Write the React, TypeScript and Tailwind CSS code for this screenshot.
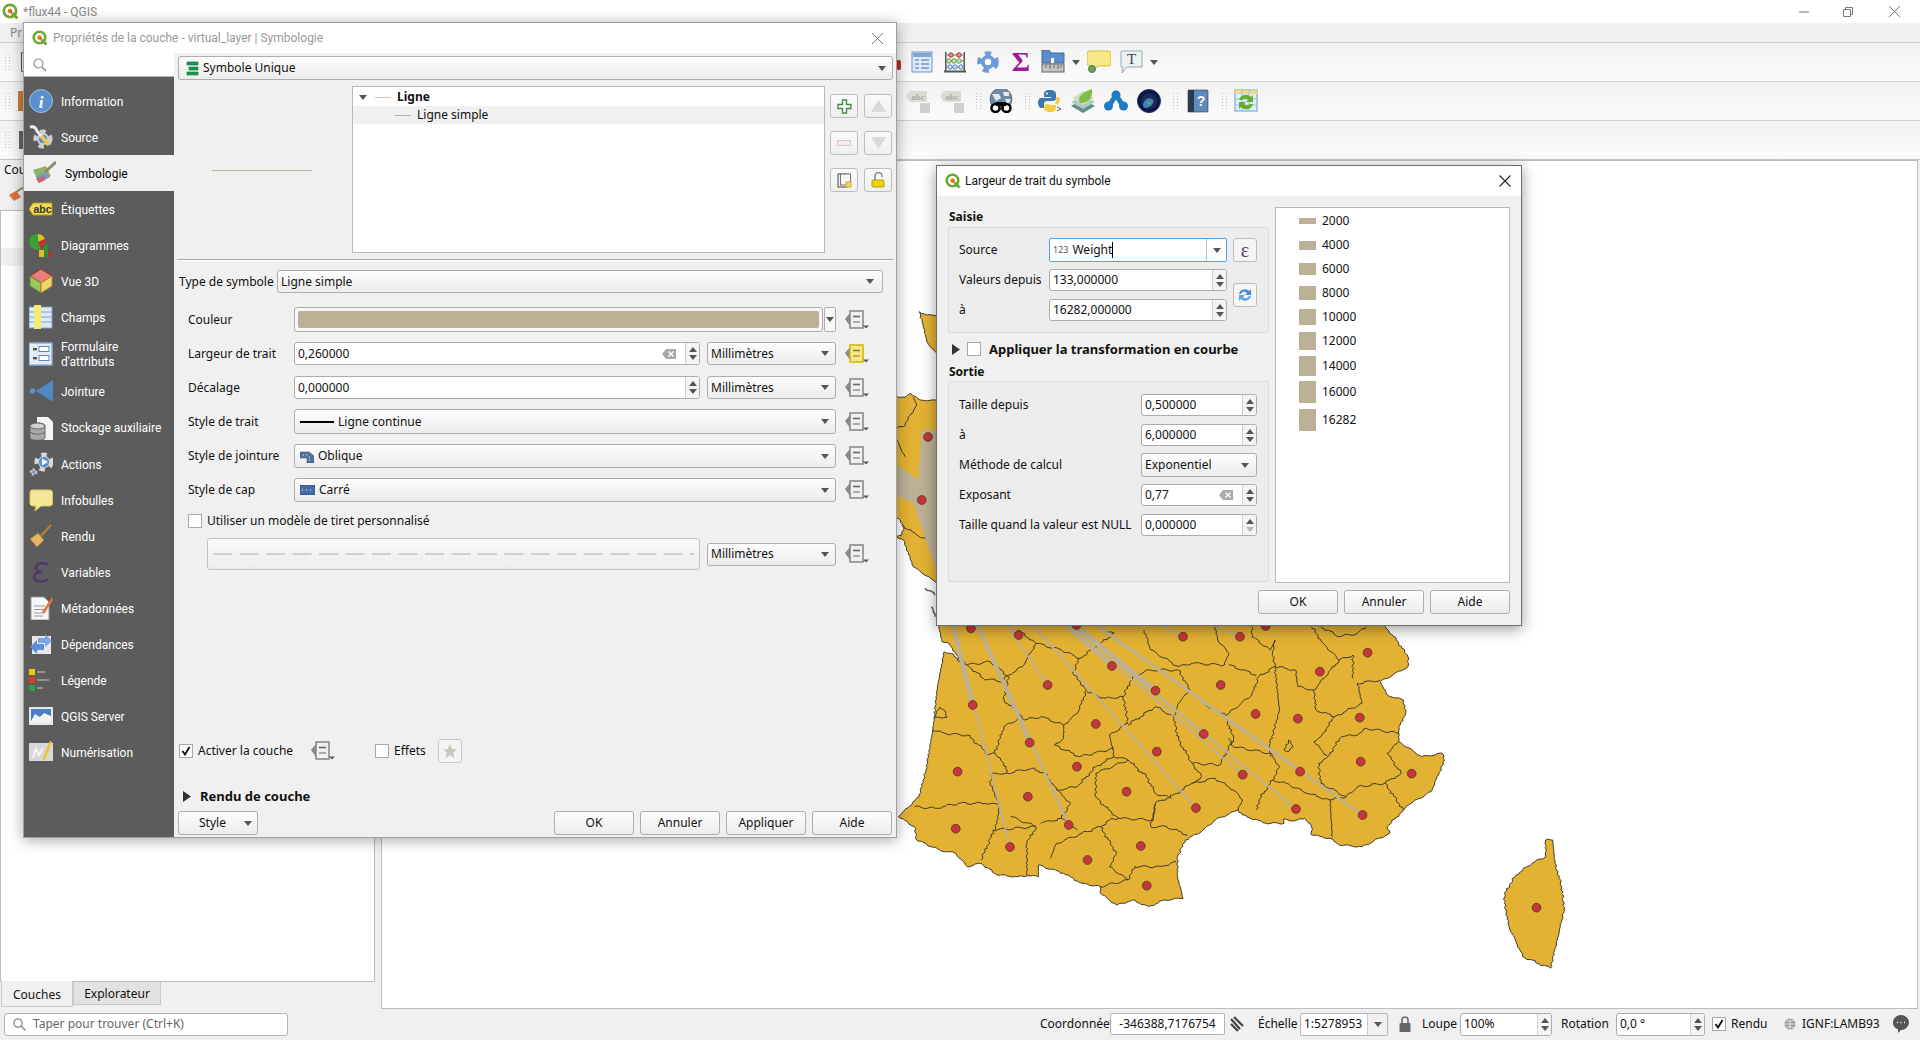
import { FC, ReactNode } from "react";

const FONT = "font-['Noto_Sans','Open_Sans',sans-serif]";
const NARROW = "font-['Roboto','Noto_Sans',sans-serif]";

type Pt = [number, number];

// map coordinates were read from crops of the reference, so convert them back to page pixels
const fromMain = ([x, y]: Pt): Pt => [880 + x / 2.178, 610 + y / 3];
const fromStrip = ([x, y]: Pt): Pt => [500 + x / 3, 340 + y / 3];

// subdivides a line and shakes it a bit, department borders are not smooth
const rough = (pts: Pt[], amp = 1, close = false): string => {
    let out = "";
    let seed = pts[0][0] * 0.37 + pts[0][1] * 0.11;
    const list = close ? [...pts, pts[0]] : pts;
    list.forEach((p, i) => {
        if (i === 0) {
            out += `M${p[0].toFixed(1)} ${p[1].toFixed(1)}`;
            return;
        }
        const q = list[i - 1];
        const len = Math.hypot(p[0] - q[0], p[1] - q[1]);
        const n = Math.max(1, Math.round(len / 2.6));
        for (let k = 1; k <= n; k++) {
            seed += 1.7;
            const t = k / n;
            const a = k === n ? 0 : Math.sin(seed * 12.9898) * amp;
            const b = k === n ? 0 : Math.sin(seed * 78.233) * amp;
            out += `L${(q[0] + (p[0] - q[0]) * t + a).toFixed(1)} ${(q[1] + (p[1] - q[1]) * t + b).toFixed(1)}`;
        }
    });
    return close ? out + "Z" : out;
};

const MAINLAND: Pt[] = [
    [128, -60], [128, 50], [135, 95], [150, 100], [170, 140], [175, 155], [155, 130], [140, 125], [125, 230], [118, 322],
    [128, 322], [146, 322], [140, 300], [130, 292], [118, 322], [115, 360], [100, 480], [85, 560], [40, 620], [75, 650], [80, 690], [130, 720], [165, 730],
    [190, 770], [220, 760], [255, 795], [300, 800], [320, 797], [345, 800], [345, 765], [400, 790], [440, 820], [480, 830],
    [480, 850], [515, 885], [550, 870], [585, 890], [620, 870], [660, 865], [648, 800], [648, 740], [665, 690], [700, 665],
    [730, 630], [780, 600], [790, 615], [840, 640], [880, 640], [878, 628], [905, 632], [925, 625], [940, 650], [940, 675], [980, 685], [1000, 705],
    [1050, 710], [1110, 670], [1105, 650], [1140, 600], [1150, 585], [1200, 545], [1230, 450], [1225, 430], [1180, 440],
    [1130, 395], [1130, 350], [1145, 310], [1140, 270], [1105, 255], [1090, 215], [1150, 170], [1150, 140], [1125, 90], [1100, 50], [1100, -60],
];

const CORSICA: Pt[] = [
    [1450, 690], [1465, 690], [1470, 760], [1485, 830], [1490, 900], [1470, 1020], [1460, 1075], [1400, 1040], [1385, 995],
    [1370, 950], [1360, 880], [1360, 850], [1385, 795], [1420, 760], [1450, 740],
];

const BORDERS: Pt[][] = [
    [[115, 360], [145, 372], [190, 375], [215, 405], [235, 435], [250, 430]],
    [[75, 590], [120, 595], [170, 580], [230, 580], [260, 585]],
    [[260, 585], [240, 520], [245, 490], [275, 490], [275, 470], [250, 430]],
    [[275, 490], [330, 475], [360, 490], [385, 540]],
    [[250, 430], [270, 350], [310, 320], [270, 270], [280, 200], [240, 155], [190, 165], [180, 150]],
    [[190, 165], [225, 205], [265, 215], [280, 195], [310, 170], [340, 100], [300, 60]],
    [[340, 100], [395, 120], [435, 145], [420, 190], [450, 240], [430, 310], [400, 345], [350, 320], [315, 330], [300, 310]],
    [[435, 145], [480, 100], [510, 70], [470, 50]],
    [[450, 245], [490, 265], [530, 260], [540, 340], [500, 375], [510, 440], [470, 470], [430, 530], [385, 540]],
    [[400, 345], [400, 385], [380, 405], [435, 440], [510, 415]],
    [[530, 260], [550, 200], [585, 180], [650, 180]],
    [[575, 60], [590, 120], [650, 170], [680, 160], [750, 165], [760, 130], [735, 90], [730, 50]],
    [[650, 180], [675, 240], [650, 280], [640, 325], [650, 390], [680, 460], [740, 465], [770, 385], [750, 310], [720, 295], [690, 260]],
    [[755, 315], [810, 255], [825, 200], [860, 170], [870, 300], [850, 400], [850, 440]],
    [[820, 195], [760, 165]],
    [[860, 170], [855, 130], [860, 90], [850, 120], [810, 80], [810, 50]],
    [[860, 170], [905, 180], [910, 230], [945, 240], [950, 300], [990, 320], [960, 380], [945, 395], [975, 440]],
    [[990, 320], [1050, 280], [1040, 220], [1090, 210]],
    [[945, 240], [1000, 150], [1030, 135], [1030, 205]],
    [[1000, 150], [965, 100], [940, 50]],
    [[975, 440], [1005, 380], [1040, 375], [1060, 355], [1130, 370]],
    [[975, 440], [955, 460], [960, 520], [1015, 560], [1040, 530], [1100, 520], [1135, 490], [1105, 430], [1130, 395]],
    [[1100, 520], [1140, 600]],
    [[1015, 560], [980, 570], [985, 680]],
    [[980, 570], [930, 550], [885, 520], [855, 510], [825, 570], [820, 600]],
    [[855, 510], [870, 470], [850, 430], [770, 410], [760, 385]],
    [[680, 460], [700, 500], [680, 520], [730, 505], [770, 540], [790, 570], [780, 600]],
    [[680, 520], [640, 555], [600, 580], [595, 630], [520, 625], [500, 630], [480, 650], [440, 670], [385, 700], [370, 745]],
    [[510, 440], [540, 450], [470, 490], [470, 560], [490, 590], [520, 625]],
    [[540, 450], [580, 500], [600, 550], [635, 565]],
    [[540, 345], [600, 290], [640, 320]],
    [[600, 580], [590, 650], [625, 650], [670, 675]],
    [[480, 650], [515, 730], [500, 770], [540, 810], [555, 770], [610, 770], [645, 755]],
    [[540, 810], [480, 830]],
    [[260, 585], [255, 640], [220, 750]],
    [[245, 660], [340, 650], [320, 700], [320, 795]],
    [[285, 620], [340, 650]],
    [[385, 540], [415, 580], [395, 625], [350, 640]],
    [[395, 625], [430, 660]],
    [[960, 50], [1000, 80], [1040, 70], [1060, 50]],
    [[880, 420], [890, 390], [900, 410], [885, 425], [880, 420]],
];

const STRIP_BORDERS: Pt[][] = [
    [[1190, 265], [1210, 260], [1250, 195], [1240, 172]],
    [[1190, 300], [1200, 320], [1215, 350]],
    [[1205, 555], [1250, 585], [1280, 600], [1310, 600]],
];

const DOTS: Pt[] = [
    [198, 55], [302, 75], [428, 45], [660, 80], [784, 80], [840, 48], [1062, 128], [958, 185], [505, 168], [365, 225], [600, 242],
    [742, 225], [202, 285], [818, 312], [910, 326], [1045, 323], [470, 342], [326, 398], [705, 372], [603, 425], [1047, 455],
    [169, 485], [429, 470], [915, 485], [790, 494], [1158, 491], [537, 545], [322, 560], [688, 594], [906, 597], [1051, 615],
    [165, 656], [411, 645], [283, 711], [568, 708], [452, 750], [581, 827], [1430, 893],
];

const HUB: Pt = [921.7, 500];
const FLOWS: [Pt, number][] = [
    [[283, 710], 1.8], [[202, 285], 4.5], [[411, 645], 2.5], [[326, 398], 3], [[302, 75], 1.8], [[365, 225], 1.8], [[688, 594], 2],
    [[505, 168], 3], [[600, 242], 4], [[705, 372], 1.8], [[790, 494], 1.8], [[905, 597], 2], [[915, 485], 2], [[1051, 615], 2.2],
    [[660, 80], 1.8], [[784, 80], 1.8],
];

const FranceMap: FC = () => {
    const yellow = "#e3b233";
    const line = "#3f3b30";
    return (
        <svg className="absolute inset-0" width={1536} height={847} viewBox="382 161 1536 847">
            <path d={rough(MAINLAND.map(fromMain), 0.8, true)} fill={yellow} stroke={line} strokeWidth={1} />
            <path d={rough(CORSICA.map(fromMain), 1, true)} fill={yellow} stroke={line} strokeWidth={1} />
            <path
                d={rough(([[1190, 170], [1215, 172], [1232, 160], [1260, 180], [1320, 182], [1320, 735], [1305, 725], [1240, 680], [1210, 600], [1190, 590], [1205, 585], [1212, 560], [1195, 535], [1170, 540], [1170, 170]] as Pt[]).map(fromStrip), 0.6, true)}
                fill={yellow}
                stroke={line}
                strokeWidth={1}
            />
            <path
                d={rough(([[1258, 935], [1280, 945], [1320, 945], [1320, 1070], [1300, 1050], [1280, 1025], [1270, 975]] as Pt[]).map(([x, y]): Pt => [500 + x / 3, y / 3]), 0.6, true)}
                fill={yellow}
                stroke={line}
                strokeWidth={1}
            />
            <path d={rough(([[1275, 745], [1290, 752], [1305, 765]] as Pt[]).map(fromStrip))} fill="none" stroke="#6b6656" strokeWidth={1.6} />
            <path d={rough(([[1295, 800], [1300, 815], [1305, 830]] as Pt[]).map(fromStrip))} fill="none" stroke="#6b6656" strokeWidth={1.6} />
            {BORDERS.map((b, i) => (
                <path key={i} d={rough(b.map(fromMain), 1.1)} fill="none" stroke={line} strokeWidth={1} />
            ))}
            {STRIP_BORDERS.map((b, i) => (
                <path key={i} d={rough(b.map(fromStrip), 1)} fill="none" stroke={line} strokeWidth={1} />
            ))}
            <polygon
                fill="#bcb096"
                points={([[1265, 270], [1320, 270], [1320, 740], [1305, 680], [1240, 490], [1170, 460], [1170, 360], [1255, 420]] as Pt[])
                    .map(fromStrip)
                    .map((p) => p.join(","))
                    .join(" ")}
            />
            {FLOWS.map(([to, w], i) => {
                const [x, y] = fromMain(to);
                return <line key={i} x1={HUB[0]} y1={HUB[1]} x2={x} y2={y} stroke="#bcb096" strokeWidth={w} />;
            })}
            {[...DOTS.map(fromMain), HUB, [928, 437] as Pt].map(([x, y], i) => (
                <circle key={i} cx={x} cy={y} r={4.4} fill="#c8353a" stroke="#4d3a2a" strokeWidth={0.8} />
            ))}
        </svg>
    );
};

const Arrow: FC<{ className?: string }> = ({ className = "" }) => (
    <svg width={8} height={5} viewBox="0 0 8 5" className={`shrink-0 ${className}`}>
        <path d="M0 0h8L4 5z" fill="#555" />
    </svg>
);

const Logo: FC<{ size?: number }> = ({ size = 16 }) => (
    <svg width={size} height={size} viewBox="0 0 16 16" className="shrink-0">
        <circle cx={7.5} cy={7.5} r={5.8} fill="#fff" stroke="#6fa82f" strokeWidth={2.6} />
        <path d="M9.5 9.5l5 5" stroke="#6fa82f" strokeWidth={2.8} />
        <circle cx={7.5} cy={7.5} r={2.2} fill="#ee7913" />
        <circle cx={8.6} cy={8.6} r={1} fill="#d63e2e" />
    </svg>
);

const DataDefined: FC<{ active?: boolean }> = ({ active }) => (
    <svg width={26} height={22} viewBox="0 0 26 22" className="shrink-0">
        <path d="M1 10l5-6v13z" fill="#888" />
        <rect x={6} y={2} width={13} height={17} fill={active ? "#f7e884" : "#f0f0f0"} stroke={active ? "#d9b611" : "#8b8b8b"} strokeWidth={1.6} />
        <path d="M9 7.5h7" stroke={active ? "#8d7c2a" : "#666"} strokeWidth={1.6} />
        <path d="M9 13h7" stroke={active ? "#b8a44d" : "#999"} strokeWidth={1.6} />
        <path d="M19 16.5h6l-3 3z" fill="#555" />
    </svg>
);

const Handle: FC = () => (
    <svg width={6} height={17} viewBox="0 0 6 17" className="shrink-0">
        {[1, 4, 7, 10, 13, 16].map((y) => (
            <g key={y} fill="#bdbdbd">
                <rect x={0} y={y - 1} width={1} height={1} />
                <rect x={4} y={y - 1} width={1} height={1} />
            </g>
        ))}
    </svg>
);

const Icon: FC<{ children: ReactNode; size?: number; className?: string }> = ({ children, size = 24, className = "" }) => (
    <svg width={size} height={size} viewBox="0 0 24 24" className={`shrink-0 ${className}`}>
        {children}
    </svg>
);

const Gear: FC<{ cx: number; cy: number; r: number; color: string }> = ({ cx, cy, r, color }) => (
    <g>
        <circle cx={cx} cy={cy} r={r} fill="none" stroke={color} strokeWidth={r * 0.55} strokeDasharray={`${r * 0.72} ${r * 0.72}`} />
        <circle cx={cx} cy={cy} r={r * 0.82} fill={color} />
        <circle cx={cx} cy={cy} r={r * 0.38} fill="#fff" />
    </g>
);

const sideIcons: Record<string, ReactNode> = {
    info: (
        <>
            <circle cx={12} cy={12} r={11.5} fill="#5c8fce" stroke="#9dbde6" />
            <text x={12} y={19} textAnchor="middle" fontSize={17} fontWeight={700} fontStyle="italic" fill="#fff" fontFamily="Liberation Serif">i</text>
        </>
    ),
    source: (
        <>
            <Gear cx={14} cy={14} r={7.5} color="#cfcfcf" />
            <circle cx={14} cy={14} r={4} fill="#4f86c6" />
            <path d="M1 2c4-1 6 1 7 4l11 13" stroke="#eee" strokeWidth={3} fill="none" />
            <path d="M12 11l8 9" stroke="#e4c95a" strokeWidth={4} />
        </>
    ),
    symbology: (
        <>
            <path d="M1 9l13-4 5 10-12 7z" fill="#8db36a" />
            <path d="M4 15l10-4 4 5-11 6z" fill="#7f95c5" />
            <path d="M4 18l8-3 1 4-6 3z" fill="#c86a6a" />
            <path d="M13 11L24 1" stroke="#8e8a70" strokeWidth={3} />
        </>
    ),
    labels: (
        <>
            <path d="M0 12l4-6h19v12H4z" fill="#f0dc4e" stroke="#b99a12" />
            <text x={13.5} y={16} textAnchor="middle" fontSize={10.5} fontWeight={700} fill="#333" fontFamily="Liberation Sans">abc</text>
        </>
    ),
    diagrams: (
        <>
            <path d="M9 9V1a8 8 0 0 1 7 5z" fill="#d5c41e" />
            <path d="M9 9l7-3a8 8 0 0 1-4 10z" fill="#c7322b" />
            <path d="M9 9l3 7A8 8 0 1 1 9 1z" fill="#3d9e3a" />
            <rect x={10} y={17} width={5} height={7} fill="#e2bd22" />
            <rect x={15} y={11} width={4} height={13} fill="#2e8c3a" />
            <rect x={19} y={19} width={4} height={5} fill="#b8302a" />
        </>
    ),
    threeD: (
        <>
            <path d="M12 0l11 7-11 7L1 7z" fill="#ea7d7d" stroke="#9b2f2f" />
            <path d="M1 7l11 7v10L1 17z" fill="#9fc85a" stroke="#63882f" />
            <path d="M23 7l-11 7v10l11-7z" fill="#f0d668" stroke="#a58d25" />
        </>
    ),
    fields: (
        <>
            <rect x={0} y={2} width={23} height={21} fill="#dfe9f6" stroke="#7ea1cd" />
            <path d="M0 7h23M0 12h23M0 17h23" stroke="#7ea1cd" />
            <rect x={5} y={0} width={7} height={25} fill="#f4ec6c" />
        </>
    ),
    form: (
        <>
            <rect x={0} y={1} width={23} height={22} fill="#e5edf7" stroke="#8eacd2" strokeWidth={1.5} />
            <rect x={4} y={6} width={4} height={2.4} fill="#555" />
            <rect x={4} y={15} width={4} height={2.4} fill="#555" />
            <rect x={10} y={4.5} width={10} height={5} fill="#fff" stroke="#5d88bd" />
            <rect x={10} y={13.5} width={10} height={5} fill="#fff" stroke="#5d88bd" />
        </>
    ),
    join: (
        <>
            <circle cx={3.5} cy={12} r={2.8} fill="#5a8fd0" />
            <path d="M7 12L24 1v22z" fill="#4f87c7" />
        </>
    ),
    storage: (
        <>
            <path d="M8 1h11l5 5v18H8z" fill="#f5f5f5" />
            <path d="M1 10c0-4 15-4 15 0v12c0 3-15 3-15 0z" fill="#a8a8a8" stroke="#666" />
            <ellipse cx={8.5} cy={10} rx={7.5} ry={3} fill="#d0d0d0" stroke="#666" />
            <path d="M1 16c3 3 12 3 15 0" fill="none" stroke="#666" />
        </>
    ),
    actions: (
        <>
            <Gear cx={15} cy={10} r={7.5} color="#d8d8d8" />
            <circle cx={15} cy={10} r={5.2} fill="#5a8fd0" />
            <path d="M13 6.5l6 3.5-6 3.5z" fill="#fff" />
            <Gear cx={4.5} cy={20} r={3} color="#c9c9c9" />
            <circle cx={4.5} cy={20} r={1.5} fill="#5a8fd0" />
        </>
    ),
    tips: (
        <path d="M3 2h18q2.500 0 2.500 3v10q0 3-3 3H12l-6 5 1-5H4q-3 0-3-3V5q0-3 2-3z" fill="#f4e79a" stroke="#d9c65c" />
    ),
    render: (
        <>
            <path d="M22 1L11 13" stroke="#b5812e" strokeWidth={2.5} />
            <path d="M1 15l8-6 6 7-7 7z" fill="#e3b36a" stroke="#a67b35" />
        </>
    ),
    variables: <path d="M19 5c-3-3-12-3-12 3 0 3 3 4 6 4-4 0-8 1-8 5 0 5 9 6 14 2" fill="none" stroke="#54346f" strokeWidth={2.4} />,
    metadata: (
        <>
            <path d="M2 1h13l5 5v18H2z" fill="#f7f7f7" stroke="#999" />
            <path d="M5 10h11M5 13.500h11M5 17h9M5 20h9" stroke="#999" />
            <path d="M13 16L23 1l1 3-9 14z" fill="#e0763a" />
        </>
    ),
    deps: (
        <>
            <rect x={3} y={4} width={19} height={18} fill="#e8e8ec" />
            <path d="M1 15l7-7v4h7v6H8v4z" fill="#5c90d8" />
            <path d="M23 9l-7-7v4H9v5h7v4z" fill="#7ba8e3" />
        </>
    ),
    legend: (
        <>
            <rect x={0} y={1} width={6} height={6} fill="#f2c511" />
            <rect x={0} y={9} width={6} height={6} fill="#dd3a1e" />
            <rect x={0} y={17} width={6} height={6} fill="#2da24a" />
            <path d="M8 4h8M8 12h12M8 20h6" stroke="#a5a5a5" strokeWidth={1.6} />
        </>
    ),
    server: (
        <>
            <rect x={0} y={3} width={24} height={18} fill="#e7e7e7" />
            <rect x={2} y={5} width={20} height={14} fill="#4a7fc4" />
            <path d="M2 17l4-7 5 3 4-4 7 3v7H2z" fill="#f2f2f2" />
        </>
    ),
    digitize: (
        <>
            <rect x={0} y={3} width={24} height={18} fill="#d8d8d8" />
            <path d="M4 18l3-9 3 6 4-7" stroke="#f5f5f5" strokeWidth={2} fill="none" />
            <path d="M13 19L21 1l2 1-7 18z" fill="#e6c63a" />
        </>
    ),
};

const SIDE_ITEMS: { label: string; icon: string; h: string; two?: boolean }[] = [
    { label: "Information", icon: "info", h: "h-[36px]" },
    { label: "Source", icon: "source", h: "h-[36px]" },
    { label: "Symbologie", icon: "symbology", h: "h-[36px]" },
    { label: "Étiquettes", icon: "labels", h: "h-[36px]" },
    { label: "Diagrammes", icon: "diagrams", h: "h-[36px]" },
    { label: "Vue 3D", icon: "threeD", h: "h-[36px]" },
    { label: "Champs", icon: "fields", h: "h-[36px]" },
    { label: "Formulaire d'attributs", icon: "form", h: "h-[38px]", two: true },
    { label: "Jointure", icon: "join", h: "h-[36px]" },
    { label: "Stockage auxiliaire", icon: "storage", h: "h-[37px]" },
    { label: "Actions", icon: "actions", h: "h-[36px]" },
    { label: "Infobulles", icon: "tips", h: "h-[36px]" },
    { label: "Rendu", icon: "render", h: "h-[36px]" },
    { label: "Variables", icon: "variables", h: "h-[36px]" },
    { label: "Métadonnées", icon: "metadata", h: "h-[36px]" },
    { label: "Dépendances", icon: "deps", h: "h-[36px]" },
    { label: "Légende", icon: "legend", h: "h-[36px]" },
    { label: "QGIS Server", icon: "server", h: "h-[36px]" },
    { label: "Numérisation", icon: "digitize", h: "h-[36px]" },
];

const Combo: FC<{ className?: string; children: ReactNode; arrowRight?: string }> = ({ className = "", children, arrowRight = "mr-[5px]" }) => (
    <div className={`flex items-center border border-[#adadad] rounded-[3px] bg-linear-to-b from-[#fdfdfd] to-[#ececec] pl-[3px] ${className}`}>
        <div className="flex-1 flex items-center gap-[4px] min-w-0 whitespace-nowrap">{children}</div>
        <Arrow className={arrowRight} />
    </div>
);

const ClearIcon: FC = () => (
    <svg width={14} height={10} viewBox="0 0 14 10" className="shrink-0">
        <path d="M4 0h10v10H4L0 5z" fill="#aaa" />
        <path d="M6.500 2.500l5 5M11.500 2.500l-5 5" stroke="#fff" strokeWidth={1.3} />
    </svg>
);

const Spin: FC<{ value: string; clear?: boolean; className?: string; downFaded?: boolean }> = ({ value, clear, className = "", downFaded }) => (
    <div className={`flex items-stretch border border-[#adadad] rounded-[3px] bg-white overflow-hidden ${className}`}>
        <div className="flex-1 flex items-center pl-[3px] pr-[9px]">
            <span className="flex-1">{value}</span>
            {clear && <ClearIcon />}
        </div>
        <div className="w-[14px] border-l border-[#d0d0d0] bg-[#f4f4f4] flex flex-col items-center justify-center gap-[3px]">
            <svg width={8} height={5} viewBox="0 0 8 5"><path d="M4 0l4 5H0z" fill="#555" /></svg>
            <svg width={8} height={5} viewBox="0 0 8 5"><path d="M0 0h8L4 5z" fill={downFaded ? "#b5b5b5" : "#555"} /></svg>
        </div>
    </div>
);

const Check: FC<{ on?: boolean; className?: string }> = ({ on, className = "" }) => (
    <div className={`w-[14px] h-[14px] border border-[#a8a8a8] bg-white flex items-center justify-center shrink-0 ${className}`}>
        {on && (
            <svg width={10} height={10} viewBox="0 0 10 10">
                <path d="M1.500 5l2.500 3.500L8.500 1" stroke="#111" strokeWidth={1.8} fill="none" />
            </svg>
        )}
    </div>
);

const Button: FC<{ children: ReactNode; className?: string }> = ({ children, className = "" }) => (
    <div className={`h-[24px] flex items-center justify-center border border-[#adadad] rounded-[3px] bg-linear-to-b from-[#fdfdfd] to-[#ececec] ${className}`}>
        {children}
    </div>
);

const SquareBtn: FC<{ children: ReactNode; className?: string }> = ({ children, className = "" }) => (
    <div className={`w-[28px] h-[24px] flex items-center justify-center border border-[#bdbdbd] rounded-[3px] bg-linear-to-b from-[#fafafa] to-[#efefef] ${className}`}>
        {children}
    </div>
);

const Triangle: FC = () => (
    <svg width={8} height={11} viewBox="0 0 8 11" className="shrink-0">
        <path d="M0 0l8 5.500L0 11z" fill="#333" />
    </svg>
);

const FormRow: FC<{ label: string; className?: string; children: ReactNode }> = ({ label, className = "", children }) => (
    <div className={`flex items-center ${className}`}>
        <div className="w-[116px] pl-[10px] shrink-0">{label}</div>
        {children}
    </div>
);

const UnitCombo: FC = () => (
    <Combo className="w-[129px] h-[23px]" arrowRight="mr-[6px]">Millimètres</Combo>
);

const LayerProperties: FC = () => (
    <div className="absolute left-[23px] top-[22px] w-[874px] h-[816px] bg-[#f0f0f0] border border-[#a0a0a0] shadow-[0_2px_14px_rgba(0,0,0,0.35)] flex flex-col">
        <div className={`h-[30px] bg-white flex items-center pl-[8px] pr-[13px] gap-[5px] text-[#999] ${NARROW}`}>
            <Logo />
            <span className="flex-1">Propriétés de la couche - virtual_layer | Symbologie</span>
            <svg width={11} height={11} viewBox="0 0 11 11"><path d="M0 0l11 11M11 0L0 11" stroke="#777" /></svg>
        </div>
        <div className="flex-1 flex min-h-0">
            <aside className={`w-[150px] bg-[#5c5c5c] text-white ${NARROW}`}>
                <div className="h-[24px] bg-white border-b border-[#b0b0b0] flex items-center pl-[9px]">
                    <svg width={14} height={14} viewBox="0 0 14 14"><circle cx={5.500} cy={5.500} r={4.500} fill="none" stroke="#888" strokeWidth={1.200} /><path d="M9 9l4 4" stroke="#888" strokeWidth={1.400} /></svg>
                </div>
                <div className="pt-[6px]">
                    {SIDE_ITEMS.map((it) => {
                        const selected = it.label === "Symbologie";
                        return (
                            <div key={it.label} className={`${it.h} flex items-center ${selected ? "bg-[#f0f0f0] text-black pl-[8px]" : "pl-[5px]"}`}>
                                <Icon>{sideIcons[it.icon]}</Icon>
                                <span className={`${selected ? "ml-[9px]" : "ml-[8px]"} pt-[1px] ${it.two ? "w-[80px] leading-[15px]" : ""}`}>{it.label}</span>
                            </div>
                        );
                    })}
                </div>
            </aside>
            <div className="flex-1 pl-[4px] pr-[3px] flex flex-col min-w-0">
                <Combo className="h-[24px] mt-[3px]" arrowRight="mr-[6px]">
                    <svg width={13} height={15} viewBox="0 0 13 15" className="ml-[4px]"><path d="M1 1h11v3H1zM3 6h9v3H3zM1 11h11v3H1z" fill="#1b9a57" stroke="#0f6a3a" strokeWidth={0.6} /></svg>
                    Symbole Unique
                </Combo>
                <div className="flex mt-[6px] h-[167px]">
                    <div className="w-[174px] flex items-center pl-[34px] pt-[1px]">
                        <div className="w-[100px] h-[1px] bg-[#bcb096]" />
                    </div>
                    <div className="w-[473px] h-full border border-[#b8b8b8] bg-white pt-[1px]">
                        <div className="h-[18px] flex items-center pl-[6px]">
                            <Arrow />
                            <div className="w-[16px] h-[1px] bg-[#cfc7b2] ml-[8px] mr-[6px]" />
                            <span className="font-bold">Ligne</span>
                        </div>
                        <div className="h-[18px] flex items-center bg-[#f0f0f0] pl-[42px]">
                            <div className="w-[16px] h-[1px] bg-[#a9b7bf] mr-[6px]" />
                            Ligne simple
                        </div>
                    </div>
                    <div className="ml-[5px] mt-[8px] grid grid-cols-[28px_28px] gap-x-[6px] gap-y-[13px] content-start">
                        <SquareBtn>
                            <svg width={15} height={15} viewBox="0 0 15 15"><path d="M5.500 1h4v4.500H14v4H9.500V14h-4V9.500H1v-4h4.500z" fill="#fff" stroke="#3f8a3f" strokeWidth={1.300} /></svg>
                        </SquareBtn>
                        <SquareBtn>
                            <svg width={15} height={12} viewBox="0 0 15 12"><path d="M7.500 0L15 12H0z" fill="#d9d9d9" /></svg>
                        </SquareBtn>
                        <SquareBtn>
                            <svg width={14} height={6} viewBox="0 0 14 6"><rect x={0.500} y={0.500} width={13} height={5} fill="#f4ecec" stroke="#dcc8c8" /></svg>
                        </SquareBtn>
                        <SquareBtn>
                            <svg width={15} height={12} viewBox="0 0 15 12"><path d="M0 0h15L7.500 12z" fill="#d9d9d9" /></svg>
                        </SquareBtn>
                        <SquareBtn>
                            <svg width={15} height={15} viewBox="0 0 15 15"><rect x={1} y={1} width={9} height={13} fill="#eee" stroke="#666" strokeWidth={1.200} /><rect x={3.500} y={1} width={10} height={11} fill="#f6f6f6" stroke="#777" /><rect x={9} y={9} width={5} height={5} fill="#f1dc66" stroke="#c8a92e" /></svg>
                        </SquareBtn>
                        <SquareBtn>
                            <svg width={14} height={16} viewBox="0 0 14 16"><path d="M4 8V4a3.500 3.500 0 0 1 7 0v1" fill="none" stroke="#888" strokeWidth={1.500} /><rect x={1} y={8} width={12} height={7} rx={1} fill="#f0d400" stroke="#b59c10" /></svg>
                        </SquareBtn>
                    </div>
                </div>
                <div className="h-[2px] bg-[#a8a8a8] mt-[6px] -ml-[1px] border-b border-[#fff]" />
                <div className="flex items-center mt-[9px] h-[23px]">
                    <span className="w-[99px] pl-[1px] shrink-0 whitespace-nowrap">Type de symbole</span>
                    <Combo className="w-[606px] h-[23px]" arrowRight="mr-[8px]">Ligne simple</Combo>
                </div>
                <FormRow label="Couleur" className="mt-[14px] h-[25px]">
                    <div className="w-[529px] h-[25px] border border-[#adadad] rounded-[3px] bg-[#f6f6f6] p-[3px]">
                        <div className="w-full h-full bg-[#bcb096] rounded-[2px]" />
                    </div>
                    <div className="w-[12px] h-[25px] ml-[1px] border border-[#adadad] rounded-[2px] bg-[#f8f8f8] flex items-center justify-center">
                        <Arrow />
                    </div>
                    <div className="ml-[8px]"><DataDefined /></div>
                </FormRow>
                <FormRow label="Largeur de trait" className="mt-[10px] h-[23px]">
                    <Spin value="0,260000" clear className="w-[406px] h-[23px]" />
                    <div className="ml-[7px]"><UnitCombo /></div>
                    <div className="ml-[8px]"><DataDefined active /></div>
                </FormRow>
                <FormRow label="Décalage" className="mt-[11px] h-[23px]">
                    <Spin value="0,000000" className="w-[406px] h-[23px]" />
                    <div className="ml-[7px]"><UnitCombo /></div>
                    <div className="ml-[8px]"><DataDefined /></div>
                </FormRow>
                <FormRow label="Style de trait" className="mt-[10px] h-[25px]">
                    <Combo className="w-[542px] h-[25px]" arrowRight="mr-[6px]">
                        <div className="w-[34px] h-[2px] bg-black ml-[2px]" />
                        Ligne continue
                    </Combo>
                    <div className="ml-[8px]"><DataDefined /></div>
                </FormRow>
                <FormRow label="Style de jointure" className="mt-[10px] h-[24px]">
                    <Combo className="w-[542px] h-[24px]" arrowRight="mr-[6px]">
                        <svg width={14} height={14} viewBox="0 0 14 14" className="ml-[2px]"><path d="M0 3h9l5 4v7H7V9H0z" fill="#4a72b0" stroke="#555" strokeWidth={0.6} /><path d="M3 6h1M6 6h1M9 8h1M9 11h1" stroke="#e8d24a" strokeWidth={1.400} /></svg>
                        Oblique
                    </Combo>
                    <div className="ml-[8px]"><DataDefined /></div>
                </FormRow>
                <FormRow label="Style de cap" className="mt-[10px] h-[24px]">
                    <Combo className="w-[542px] h-[24px]" arrowRight="mr-[6px]">
                        <svg width={15} height={10} viewBox="0 0 15 10" className="ml-[2px]"><rect width={15} height={10} fill="#3f6cae" stroke="#444" strokeWidth={0.6} /><path d="M2 5h1M6 5h1M10 5h1" stroke="#e8d24a" strokeWidth={1.500} /></svg>
                        Carré
                    </Combo>
                    <div className="ml-[8px]"><DataDefined /></div>
                </FormRow>
                <div className="flex items-center mt-[11px] h-[16px] pl-[10px]">
                    <Check />
                    <span className="ml-[5px]">Utiliser un modèle de tiret personnalisé</span>
                </div>
                <div className="flex items-center mt-[9px] pl-[29px]">
                    <div className="w-[493px] h-[32px] border border-[#c4c4c4] rounded-[3px] bg-linear-to-b from-[#fafafa] to-[#ececec] flex items-center px-[5px]">
                        <svg width={481} height={2} viewBox="0 0 481 2"><line x1={0} y1={1} x2={481} y2={1} stroke="#aaa" strokeDasharray="19 7.500" /></svg>
                    </div>
                    <div className="ml-[7px]"><UnitCombo /></div>
                    <div className="ml-[8px]"><DataDefined /></div>
                </div>
                <div className="flex-1" />
                <div className="flex items-center h-[24px] pl-[1px]">
                    <Check on />
                    <span className="ml-[5px] w-[112px]">Activer la couche</span>
                    <DataDefined />
                    <Check className="ml-[39px]" />
                    <span className="ml-[5px] w-[44px]">Effets</span>
                    <div className="w-[24px] h-[24px] border border-[#c8c8c8] rounded-[3px] bg-[#f4f4f4] flex items-center justify-center">
                        <svg width={14} height={14} viewBox="0 0 14 14"><path d="M7 0l2 5 5 .4-3.800 3.200L11.400 14 7 11 2.600 14l1.200-5.400L0 5.400 5 5z" fill="#c9c5ba" /></svg>
                    </div>
                </div>
                <div className="flex items-center mt-[23px] h-[20px] pl-[5px]">
                    <Triangle />
                    <span className="ml-[9px] text-[13px] font-bold">Rendu de couche</span>
                </div>
                <div className="flex justify-between mt-[5px] mb-[2px] pr-[1px]">
                    <Combo className="w-[80px] h-[24px] pl-[20px]" arrowRight="mr-[5px]">Style</Combo>
                    <div className="flex gap-[6px]">
                        <Button className="w-[80px]">OK</Button>
                        <Button className="w-[80px]">Annuler</Button>
                        <Button className="w-[80px]">Appliquer</Button>
                        <Button className="w-[80px]">Aide</Button>
                    </div>
                </div>
            </div>
        </div>
    </div>
);

const LEGEND: [string, string, string][] = [
    ["2000", "h-[6px]", "h-[24px]"],
    ["4000", "h-[9px]", "h-[24px]"],
    ["6000", "h-[12px]", "h-[24px]"],
    ["8000", "h-[14px]", "h-[24px]"],
    ["10000", "h-[16px]", "h-[24px]"],
    ["12000", "h-[18px]", "h-[24px]"],
    ["14000", "h-[20px]", "h-[25px]"],
    ["16000", "h-[22px]", "h-[28px]"],
    ["16282", "h-[22px]", "h-[27px]"],
];

const SizeAssistant: FC = () => (
    <div className="absolute left-[936px] top-[165px] w-[586px] h-[461px] bg-[#f0f0f0] border border-[#6e6e6e] shadow-[0_3px_14px_rgba(0,0,0,0.4)] flex flex-col">
        <div className={`h-[30px] shrink-0 bg-white flex items-center pl-[8px] pr-[10px] gap-[4px] ${NARROW}`}>
            <Logo />
            <span className="flex-1">Largeur de trait du symbole</span>
            <svg width={12} height={12} viewBox="0 0 12 12"><path d="M0.500 0.500l11 11M11.500 0.500l-11 11" stroke="#222" strokeWidth={1.100} /></svg>
        </div>
        <div className="flex pl-[11px] pr-[11px] gap-[6px]">
            <div className="w-[321px] shrink-0">
                <div className="h-[18px] mt-[12px] pl-[1px] font-bold leading-[18px]">Saisie</div>
                <div className="h-[106px] mt-[1px] border border-[#dcdcdc] rounded-[2px] bg-[#ececec] flex pl-[10px]">
                    <div className="w-[268px]">
                        <div className="flex items-center mt-[10px] h-[24px]">
                            <span className="w-[90px]">Source</span>
                            <div className="w-[178px] h-[24px] border border-[#4fa3e8] rounded-[2px] bg-white flex items-center">
                                <span className="text-[9px] text-[#555] ml-[3px] mr-[4px]">123</span>
                                <span className="flex-1 flex items-center">Weight<span className="w-[1px] h-[16px] bg-black" /></span>
                                <div className="w-[20px] h-full border-l border-[#bdbdbd] flex items-center justify-center"><Arrow /></div>
                            </div>
                        </div>
                        <div className="flex items-center mt-[7px] h-[22px]">
                            <span className="w-[90px] whitespace-nowrap">Valeurs depuis</span>
                            <Spin value="133,000000" className="w-[178px] h-[22px]" />
                        </div>
                        <div className="flex items-center mt-[8px] h-[22px]">
                            <span className="w-[90px]">à</span>
                            <Spin value="16282,000000" className="w-[178px] h-[22px]" />
                        </div>
                    </div>
                    <div className="ml-[6px]">
                        <div className="w-[24px] h-[24px] mt-[10px] border border-[#bdbdbd] rounded-[3px] bg-[#f4f4f4] flex items-center justify-center text-[20px] text-[#5b3a79] leading-none font-['Liberation_Serif',serif]">ε</div>
                        <div className="w-[24px] h-[24px] mt-[21px] border border-[#bdbdbd] rounded-[3px] bg-[#f4f4f4] flex items-center justify-center">
                            <svg width={16} height={16} viewBox="0 0 16 16"><path d="M2 7a6 6 0 0 1 10-3l2-2v6H8l2-2a3.500 3.500 0 0 0-6 1z" fill="#3f8fd6" /><path d="M14 9a6 6 0 0 1-10 3l-2 2V8h6l-2 2a3.500 3.500 0 0 0 6-1z" fill="#5ba7e6" /></svg>
                        </div>
                    </div>
                </div>
                <div className="flex items-center h-[22px] mt-[5px] pl-[4px]">
                    <Triangle />
                    <Check className="ml-[7px]" />
                    <span className="ml-[8px] text-[13px] font-bold whitespace-nowrap">Appliquer la transformation en courbe</span>
                </div>
                <div className="h-[18px] mt-[3px] pl-[1px] font-bold leading-[18px]">Sortie</div>
                <div className="h-[201px] border border-[#dcdcdc] rounded-[2px] bg-[#ececec] pl-[10px] pt-[12px]">
                    <div className="flex items-center h-[22px]">
                        <span className="w-[182px]">Taille depuis</span>
                        <Spin value="0,500000" className="w-[116px] h-[22px]" />
                    </div>
                    <div className="flex items-center h-[22px] mt-[8px]">
                        <span className="w-[182px]">à</span>
                        <Spin value="6,000000" className="w-[116px] h-[22px]" />
                    </div>
                    <div className="flex items-center h-[24px] mt-[7px]">
                        <span className="w-[182px]">Méthode de calcul</span>
                        <Combo className="w-[116px] h-[24px]" arrowRight="mr-[7px]">Exponentiel</Combo>
                    </div>
                    <div className="flex items-center h-[22px] mt-[7px]">
                        <span className="w-[182px]">Exposant</span>
                        <Spin value="0,77" clear className="w-[116px] h-[22px]" />
                    </div>
                    <div className="flex items-center h-[22px] mt-[8px]">
                        <span className="w-[182px] whitespace-nowrap">Taille quand la valeur est NULL</span>
                        <Spin value="0,000000" downFaded className="w-[116px] h-[22px]" />
                    </div>
                </div>
            </div>
            <div className="w-[235px] h-[376px] mt-[11px] border border-[#b8b8b8] bg-white pt-[1px] pl-[23px]">
                {LEGEND.map(([label, size, rowH]) => (
                    <div key={label} className={`${rowH} flex items-center`}>
                        <div className={`w-[17px] ${size} bg-[#bcb096]`} />
                        <span className="ml-[6px]">{label}</span>
                    </div>
                ))}
            </div>
        </div>
        <div className="flex justify-end gap-[6px] mt-[7px] pr-[11px]">
            <Button className="w-[80px] border-[#4fa3e8] from-[#f2f8fd] to-[#dfe9f2]">OK</Button>
            <Button className="w-[80px]">Annuler</Button>
            <Button className="w-[80px]">Aide</Button>
        </div>
    </div>
);

const Toolbar: FC<{ children?: ReactNode }> = ({ children }) => (
    <div className="h-[39px] bg-linear-to-b from-[#f2f2f2] to-[#fbfbfb] border-t border-[#d0d0d0] flex items-center pl-[5px]">
        {children}
    </div>
);

const ToolbarRowOne: FC = () => (
    <Toolbar>
        <Handle />
        <div className="w-[12px] h-[20px] ml-[10px] border border-[#555] rounded-[1px]" />
        <div className="ml-[844px] w-[24px] flex justify-end">
            <div className="w-[5px] h-[10px] mt-[6px] bg-[#c02a2a] rounded-[2px]" />
        </div>
        <Icon className="ml-[9px]">
            <rect x={2} y={2} width={20} height={20} fill="#dfe9f6" stroke="#6d97c9" />
            <rect x={3} y={3} width={18} height={4} fill="#7ea6d6" />
            <path d="M5 10h4M11 10h8M5 14h4M11 14h8M5 18h4M11 18h8" stroke="#6d97c9" strokeWidth={1.300} />
        </Icon>
        <Icon className="ml-[9px]">
            <rect x={2} y={2} width={1.500} height={19} fill="#555" />
            <rect x={20.500} y={2} width={1.500} height={19} fill="#555" />
            <rect x={1} y={20.500} width={22} height={2} fill="#555" />
            <path d="M2 5h20M2 11h20M2 17h20" stroke="#777" />
            {[8, 16].map((x) => <circle key={x} cx={x} cy={5} r={2.200} fill="#ea8e8e" stroke="#b52f2f" />)}
            {[6, 11, 16].map((x) => <circle key={x} cx={x} cy={11} r={2.200} fill="#cfe6bf" stroke="#5e9a4c" />)}
            {[7, 12, 18].map((x) => <circle key={x} cx={x} cy={17} r={2.200} fill="#cfe0f3" stroke="#4f81bd" />)}
        </Icon>
        <Icon className="ml-[9px]"><Gear cx={12} cy={12} r={8.500} color="#6f9bd8" /></Icon>
        <span className="ml-[9px] w-[24px] text-center text-[28px] leading-none font-bold text-[#a0189a] font-['Liberation_Serif',serif]">Σ</span>
        <Icon className="ml-[8px]">
            <path d="M1 5V0h7l2 3h13v10H1z" fill="#5b8dc8" stroke="#3e6a9f" />
            <path d="M10 8h3v5h-3z" fill="#fff" />
            <rect x={1} y={14} width={22} height={8} fill="#c4c4c4" stroke="#666" />
            <path d="M5 15v3M9 15v4M13 15v3M17 15v4M20 15v3" stroke="#666" />
        </Icon>
        <Arrow className="ml-[7px]" />
        <Icon className="ml-[7px]">
            <path d="M3 1h18q3 0 3 3v9q0 3-3 3H11l-3 3H4l1-3H3q-3 0-3-3V4q0-3 3-3z" fill="#f7e98a" stroke="#d8bc3c" />
            <circle cx={5} cy={19} r={3.500} fill="#6fa05e" stroke="#4f7a40" />
        </Icon>
        <Icon className="ml-[9px]">
            <path d="M1 1h21v16H7l-5 6 1-6H1z" fill="#eaf2f6" stroke="#9fa9ad" />
            <text x={11.500} y={14} textAnchor="middle" fontSize={15} fill="#444" fontFamily="Liberation Serif">T</text>
        </Icon>
        <Arrow className="ml-[6px]" />
    </Toolbar>
);

const ToolbarRowTwo: FC = () => (
    <Toolbar>
        <Handle />
        <div className="w-[10px] h-[20px] ml-[7px] bg-[#c9822d]" />
        <div className="ml-[878px]" />
        {[0, 1].map((i) => (
            <Icon key={i} className={i ? "ml-[10px]" : ""}>
                <path d="M0 7l4-5h17v11H4z" fill="#dedbd2" />
                <text x={12} y={11} textAnchor="middle" fontSize={9} fontWeight={700} fill="#aaa" fontFamily="Liberation Serif">abc</text>
                <rect x={14} y={14} width={10} height={10} rx={1} fill="#cfcfcf" />
            </Icon>
        ))}
        <div className="ml-[12px]"><Handle /></div>
        <Icon className="ml-[7px]">
            <circle cx={12} cy={10} r={11} fill="#6f8aa8" stroke="#444" strokeWidth={0.600} />
            <path d="M3 5h7l2 4-5 3zM14 3h6v4h-5zM16 10h6l-3 6z" fill="#e5e8ec" />
            <circle cx={6.500} cy={19} r={4} fill="#fff" stroke="#000" strokeWidth={2.500} />
            <circle cx={17.500} cy={19} r={4} fill="#fff" stroke="#000" strokeWidth={2.500} />
            <rect x={7} y={13} width={10} height={4} fill="#000" />
        </Icon>
        <div className="ml-[12px]"><Handle /></div>
        <Icon className="ml-[7px]">
            <path d="M12 1c-5 0-6 2-6 4v3h7v1H3c-2 0-3 2-3 5s2 5 3 5h3v-4c0-2 1-3 3-3h6c2 0 3-1 3-3V5c0-2-2-4-6-4z" fill="#3d7aab" />
            <circle cx={9} cy={4.500} r={1} fill="#fff" />
            <path d="M12 23c5 0 6-2 6-4v-3h-7v-1h8c2 0 3-2 3-5l-1-2h-3v4c0 2-1 3-3 3H9c-2 0-3 1-3 3v1c0 2 2 4 6 4z" fill="#f5cd45" />
            <path d="M19 18l4 2-4 2" fill="none" stroke="#666" />
        </Icon>
        <Icon className="ml-[9px]">
            <path d="M12 10l12 7-12 7-12-7z" fill="#5e8f88" />
            <path d="M12 6l12 7-12 7-12-7z" fill="#b5c9c4" />
            <path d="M12 2l11 7-11 7L1 9z" fill="#cfdcc4" />
            <path d="M9 14C5 8 12 3 21 0c1 7-2 14-12 14z" fill="#84bf45" />
        </Icon>
        <Icon className="ml-[9px]">
            <path d="M5 17l7-11 7 11" fill="none" stroke="#1f7cc0" strokeWidth={5} />
            <circle cx={4.500} cy={17} r={4.500} fill="#1f7cc0" />
            <circle cx={12} cy={6} r={4.500} fill="#1f7cc0" />
            <circle cx={19.500} cy={17} r={4.500} fill="#1f7cc0" />
        </Icon>
        <Icon className="ml-[9px]">
            <circle cx={12} cy={12} r={11.500} fill="#0c1648" stroke="#27325e" />
            <circle cx={12} cy={12} r={8} fill="#1a2a52" />
            <path d="M6 16c1-5 5-8 9-6 3 2 1 6-3 8s-6 1-6-2z" fill="#3d7fc2" />
            <path d="M9 15c1-2 3-3 5-2l-1 3z" fill="#5fa24b" />
        </Icon>
        <div className="ml-[12px]"><Handle /></div>
        <Icon className="ml-[7px]">
            <rect x={2} y={1} width={20} height={22} rx={1} fill="#5f8abc" stroke="#333" strokeWidth={0.600} />
            <rect x={2} y={1} width={6} height={22} fill="#2b3a4c" />
            <text x={15} y={17} textAnchor="middle" fontSize={14} fontWeight={700} fill="#fff" fontFamily="Liberation Sans">?</text>
        </Icon>
        <div className="ml-[12px]"><Handle /></div>
        <Icon className="ml-[6px]">
            <rect x={1} y={1} width={22} height={21} fill="#dfeefa" stroke="#5da0d0" />
            <rect x={1} y={1} width={22} height={4} fill="#f0d98a" />
            <path d="M1 10h22M1 16h22M8 1v21M15 1v21" stroke="#9cc4e2" />
            <path d="M5 11a7 7 0 0 1 12-3l2-2v7h-7l2-2a4 4 0 0 0-6 0z" fill="#67ad2c" />
            <path d="M19 15a7 7 0 0 1-12 3l-2 2v-7h7l-2 2a4 4 0 0 0 6 0z" fill="#67ad2c" />
        </Icon>
    </Toolbar>
);

const App: FC = () => {
    return (
        <div className={`relative w-[1920px] h-[1040px] overflow-hidden bg-[#f0f0f0] text-[12px] leading-[16px] text-[#111] ${FONT}`}>
            <div className={`h-[23px] bg-white flex items-center pl-[2px] gap-[4px] text-[#888] ${NARROW}`}>
                <Logo size={17} />
                <span>*flux44 - QGIS</span>
                <div className="ml-auto flex items-center text-[#666]">
                    <svg width={10} height={10} viewBox="0 0 10 10" className="mr-[34px]"><path d="M0 5h10" stroke="#777" /></svg>
                    <svg width={10} height={10} viewBox="0 0 10 10" className="mr-[36px]"><path d="M2.500 2.500V.5h7v7h-2M.5 2.500h7v7h-7z" fill="none" stroke="#777" /></svg>
                    <svg width={11} height={11} viewBox="0 0 11 11" className="mr-[20px]"><path d="M0 0l11 11M11 0L0 11" stroke="#777" /></svg>
                </div>
            </div>
            <div className="h-[19px] flex items-center pl-[10px] text-[#888]">Pr</div>
            <ToolbarRowOne />
            <ToolbarRowTwo />
            <Toolbar>
                <Handle />
                <div className="w-[8px] h-[18px] ml-[8px] bg-[#666]" />
            </Toolbar>
            <div className="h-[850px] flex border-t border-[#c4c4c4]">
                <div className="w-[375px] shrink-0 flex flex-col">
                    <div className="h-[50px] pl-[4px] pt-[2px]">
                        <div>Couches</div>
                        <svg width={18} height={14} viewBox="0 0 18 14" className="mt-[9px] ml-[4px]"><path d="M1 8l7-4 5 6-7 4z" fill="#e0703a" /><path d="M8 5l8-5" stroke="#8e8a70" strokeWidth={2} /></svg>
                    </div>
                    <div className="flex-1 bg-white border border-[#bdbdbd] pt-[37px]">
                        <div className="h-[18px] bg-[#f0f0f0]" />
                    </div>
                    <div className="h-[27px] flex items-start pl-[1px]">
                        <div className="w-[72px] h-[26px] -mt-[1px] pt-[2px] bg-[#f0f0f0] border border-t-0 border-[#c8c8c8] rounded-b-[2px] flex items-center justify-center">Couches</div>
                        <div className="w-[88px] h-[23px] pt-[1px] bg-[#e2e2e2] border border-t-0 border-[#c8c8c8] flex items-center justify-center">Explorateur</div>
                    </div>
                </div>
                <div className="w-[1537px] ml-[6px] mr-[2px] h-[849px] relative bg-white border border-[#bdbdbd] overflow-hidden">
                    <FranceMap />
                </div>
            </div>
            <div className="h-[30px] flex items-center">
                <div className="w-[284px] h-[23px] ml-[4px] border border-[#b4b4b4] rounded-[3px] bg-white flex items-center pl-[8px] text-[#666]">
                    <svg width={13} height={13} viewBox="0 0 13 13"><circle cx={5} cy={5} r={4.200} fill="none" stroke="#888" strokeWidth={1.200} /><path d="M8 8l4.500 4.500" stroke="#888" strokeWidth={1.400} /></svg>
                    <span className="ml-[7px]">Taper pour trouver (Ctrl+K)</span>
                </div>
                <div className="ml-auto flex items-center">
                    <span className="w-[70px]">Coordonnée</span>
                    <div className="w-[115px] h-[22px] border border-[#b4b4b4] rounded-[2px] bg-white flex items-center justify-center">-346388,7176754</div>
                    <div className="w-[33px] flex justify-center pr-[9px]">
                        <svg width={14} height={16} viewBox="0 0 14 16"><path d="M1 3l9 10M4 1l9 9M1 8l7 7" stroke="#444" strokeWidth={2.200} /></svg>
                    </div>
                    <span className="w-[42px]">Échelle</span>
                    <div className="w-[88px] h-[23px] border border-[#b4b4b4] rounded-[2px] flex items-center bg-white">
                        <span className="flex-1 pl-[3px]">1:5278953</span>
                        <div className="w-[20px] h-full bg-[#f0f0f0] border-l border-[#c8c8c8] flex items-center justify-center"><Arrow /></div>
                    </div>
                    <div className="w-[34px] flex justify-center">
                        <svg width={12} height={16} viewBox="0 0 12 16"><path d="M3 7V4a3 3 0 0 1 6 0v3" fill="none" stroke="#666" strokeWidth={1.500} /><rect x={0.500} y={7} width={11} height={9} rx={1} fill="#666" /></svg>
                    </div>
                    <span className="w-[38px]">Loupe</span>
                    <Spin value="100%" className="w-[92px] h-[23px]" />
                    <span className="w-[64px] pl-[9px]">Rotation</span>
                    <Spin value="0,0 °" className="w-[89px] h-[23px]" />
                    <Check on className="ml-[7px]" />
                    <span className="w-[58px] pl-[5px]">Rendu</span>
                    <svg width={12} height={12} viewBox="0 0 12 12" className="shrink-0"><circle cx={6} cy={6} r={5.500} fill="#999" /><path d="M0.500 6h11M6 .5v11M2 2.500q4 2 8 0M2 9.500q4-2 8 0" stroke="#eee" strokeWidth={0.800} fill="none" /></svg>
                    <span className="w-[90px] pl-[6px]">IGNF:LAMB93</span>
                    <div className="w-[34px] flex justify-start pl-[7px]">
                        <svg width={16} height={18} viewBox="0 0 16 18"><path d="M8 0a8 7.500 0 0 1 0 15l-3 3v-3.500A8 7.500 0 0 1 8 0z" fill="#555" /><path d="M4 7.500h1M7.500 7.500h1M11 7.500h1" stroke="#fff" strokeWidth={1.500} /></svg>
                    </div>
                </div>
            </div>
            <LayerProperties />
            <SizeAssistant />
        </div>
    );
};

export default App;
